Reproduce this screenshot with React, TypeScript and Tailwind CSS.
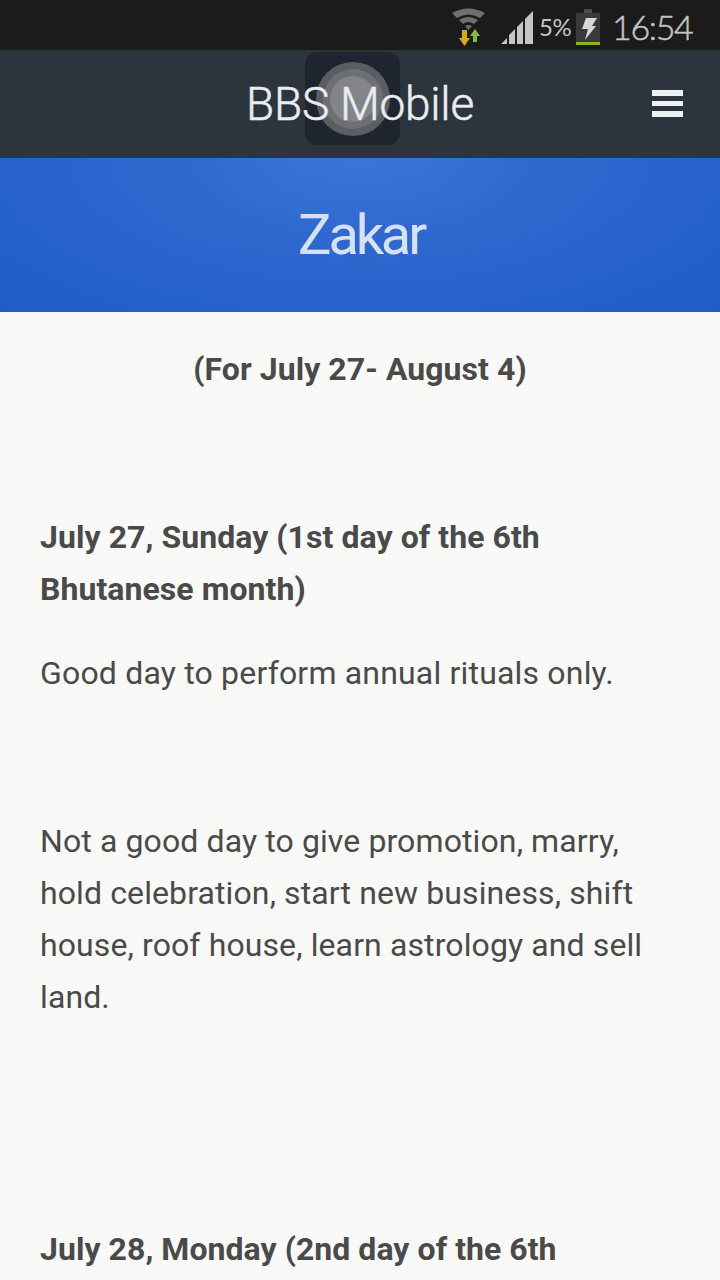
function StatusBar() {
  return (
    <div className="h-[50px] bg-[#1b1b1b] flex items-center justify-end pr-[27px] pt-1 text-[#c4c4c4] font-['Lato',sans-serif]">
      {/* wifi */}
      <svg width="36" height="40" viewBox="0 0 36 40">
        <path d="M2 6 Q18 -3 35 6 L30 11 Q18 4 7 11Z" fill="#6f6f6f" />
        <path d="M9 13 Q18 7 28 13 L24 17 Q18 13 13 17Z" fill="#6f6f6f" />
        <path d="M15 19 Q18 17 22 19 L18.500 23Z" fill="#6f6f6f" />
        <path d="M12 23 H17 V31 H20 L14.500 39 L9 31 H12Z" fill="#d6a81c" />
        <path d="M23 35 H27 V29 H30 L25 22 L20 29 H23Z" fill="#7fbf3a" />
      </svg>
      {/* signal */}
      <svg width="34" height="34" viewBox="0 0 34 34" className="ml-[14px]">
        <path d="M1 34 L7 28 V34Z M9 34 V25 L15 19 V34Z M17 34 V17 L23 11 V34Z M25 34 V9 L33 1 V34Z" fill="#c4c4c4" />
      </svg>
      <span className="ml-[5px] w-[37px] text-[24px] leading-[28px] tracking-[-0.4px]">5%</span>
      {/* battery */}
      <svg width="24" height="36" viewBox="0 0 24 36">
        <rect x="8" y="0" width="8" height="5" fill="#4a4a4a" />
        <rect x="0" y="4" width="24" height="29" fill="#3a3a3a" />
        <rect x="0" y="33" width="24" height="3" fill="#8bb81e" />
        <path d="M10 9 H21 L16 17 H20 L9 31 L12 20 H6Z" fill="#d8d8d8" />
      </svg>
      <span className="ml-[12px] w-[81px] text-[34px] leading-[40px] tracking-[-1.3px] font-light [-webkit-text-stroke:0.5px_#c4c4c4]">16:54</span>
    </div>
  )
}

function Header() {
  return (
    <header className="h-[108px] bg-[#2c343d] flex items-center justify-center relative">
      {/* launcher overlay sitting under the title */}
      <div className="absolute left-[305px] top-[2px] w-[95px] h-[93px] rounded-[12px] bg-[#1f252e] flex items-center justify-center">
        <div className="w-[74px] h-[74px] rounded-full bg-[#5a5d62] flex items-center justify-center">
          <div className="w-[60px] h-[60px] rounded-full bg-[#6d6f73] flex items-center justify-center">
            <div className="w-[46px] h-[46px] rounded-full bg-[#838488]" />
          </div>
        </div>
      </div>
      <h1 className="relative text-[46px] leading-none text-[#e9edf1] font-['Roboto',sans-serif] font-light tracking-[-0.25px] [-webkit-text-stroke:0.5px_#e9edf1]">BBS Mobile</h1>
      <div className="absolute right-[37px] top-[40px] w-[31px] flex flex-col gap-[5px]">
        <div className="h-[5.5px] bg-[#eef1f3]" />
        <div className="h-[5.5px] bg-[#eef1f3]" />
        <div className="h-[5.5px] bg-[#eef1f3]" />
      </div>
    </header>
  )
}

function Banner() {
  return (
    <div className="h-[154px] pl-[2px] flex items-center justify-center bg-[radial-gradient(ellipse_at_50%_0%,#3d74d9_0%,#2f69d0_35%,#1f5cc6_100%)]">
      <h2 className="text-[56px] leading-none tracking-[-3.2px] text-[#d5e2f6] font-['Roboto',sans-serif] font-normal">Zakar</h2>
    </div>
  )
}

export default function App() {
  return (
    <div className="w-[720px] h-[1280px] overflow-hidden bg-[#f9f9f7] font-['Roboto',sans-serif] text-[#4a4a4a]">
      <StatusBar />
      <Header />
      <Banner />
      <main className="px-10 text-[32px] leading-[52px]">
        <p className="mt-[31px] text-center font-bold tracking-[0.06px]">(For July 27- August 4)</p>
        <p className="mt-[116px] font-bold tracking-[0.06px]">July 27, Sunday (1st day of the 6th Bhutanese month)</p>
        <p className="mt-[32px] tracking-[0.18px]">Good day to perform annual rituals only.</p>
        <p className="mt-[116px] tracking-[0.11px]">Not a good day to give promotion, marry, hold celebration, start new business, shift house, roof house, learn astrology and sell land.</p>
        <p className="mt-[200px] font-bold tracking-[0.05px]">July 28, Monday (2nd day of the 6th</p>
      </main>
    </div>
  )
}
